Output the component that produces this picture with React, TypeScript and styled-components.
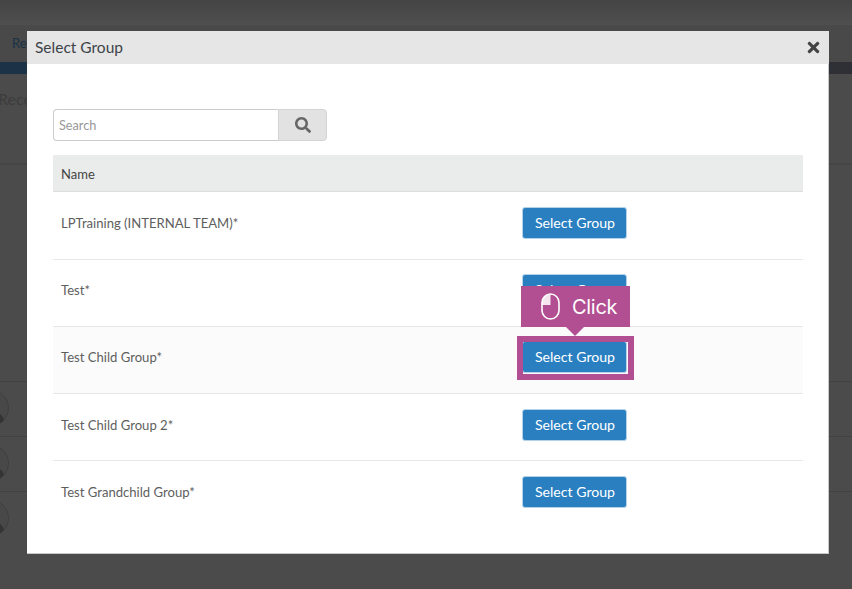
import React from 'react';
import styled, { createGlobalStyle } from 'styled-components';
import { FaSearch, FaTimes } from 'react-icons/fa';

const GlobalStyle = createGlobalStyle`
  html, body {
    margin: 0;
    padding: 0;
    height: 100%;
    overflow: hidden;
    font-family: Lato, "Liberation Sans", sans-serif;
    background: #fff;
  }
`;

const groups = [
  'LPTraining (INTERNAL TEAM)*',
  'Test*',
  'Test Child Group*',
  'Test Child Group 2*',
  'Test Grandchild Group*',
];

const Page = styled.div`
  width: 852px;
  height: 589px;
  display: flex;
  flex-direction: column;
  overflow: hidden;
  background: #f2f2f2;
`;
const TopBar = styled.div`
  height: 25px;
  background: linear-gradient(#dcdcdc, #ffffff);
`;
const Tabs = styled.div`
  height: 37px;
  padding-left: 12px;
  background: #ececec;
  box-sizing: border-box;
  font-size: 13px;
  line-height: 36px;
  color: #4fa3e0;
`;
const BlueBar = styled.div`
  height: 12px;
  background: linear-gradient(90deg, #5aa5e6, #979aae);
`;
const PageTitle = styled.h2`
  margin: 0 0 0 -2px;
  height: 90px;
  padding: 15px 0 0 0;
  box-sizing: border-box;
  font-size: 16px;
  font-weight: 400;
  color: #c4c4c4;
  border-bottom: 1px solid #dcdcdc;
`;
const Spacer = styled.div`
  height: 216px;
  border-top: 1px solid #e4e4e4;
`;
const PersonRow = styled.div`
  height: 55px;
  box-sizing: border-box;
  border-top: 1px solid #d6d6d6;
  display: flex;
  align-items: center;
`;
const AvatarIcon = styled.svg`
  width: 36px;
  height: 36px;
  margin: -3px 0 0 -27px;
`;

const Backdrop = styled.div`
  position: fixed;
  inset: 0;
  background: rgba(0, 0, 0, 0.69);
`;
const Modal = styled.div`
  position: fixed;
  left: 27px;
  top: 31px;
  width: 802px;
  height: 523px;
  background: #fff;
  box-shadow: inset -1px -1px 0 #c8c8c8;
`;
const ModalHeader = styled.div`
  height: 33px;
  box-sizing: border-box;
  padding: 0 8px 2px;
  display: flex;
  align-items: center;
  justify-content: space-between;
  background: #e6e6e6;
  color: #3d4349;
  font-size: 15.5px;
`;
const Close = styled.span`
  display: flex;
  color: #444;
  font-size: 17px;
  margin: 2px -1px 0 0;
`;
const ModalBody = styled.div`
  padding: 45px 26px 0;
`;
const SearchBar = styled.div`
  display: flex;
  width: 274px;
  height: 32px;
  margin-bottom: 14px;
`;
const SearchInput = styled.input`
  width: 225px;
  box-sizing: border-box;
  padding: 0 5px;
  border: 1px solid #ccc;
  border-right: none;
  border-radius: 4px 0 0 4px;
  font: 12.7px Lato, "Liberation Sans", sans-serif;
  outline: none;
  &::placeholder {
    color: #999;
    opacity: 1;
  }
`;
const SearchButton = styled.button`
  flex: 1;
  padding: 0;
  display: flex;
  align-items: center;
  justify-content: center;
  border: 1px solid #d4d4d4;
  border-radius: 0 4px 4px 0;
  background: #e2e2e2;
  color: #666;
  font-size: 16px;
`;
const Table = styled.div`
  width: 750px;
`;
const HeadRow = styled.div`
  height: 37px;
  box-sizing: border-box;
  padding: 1px 8px 0;
  display: flex;
  align-items: center;
  background: #eaeceb;
  border-bottom: 1px solid #ddd;
  font-size: 13px;
  color: #444;
`;
const Row = styled.div<{ $active?: boolean; $drop: number }>`
  position: relative;
  height: 67px;
  box-sizing: border-box;
  padding: 0 8px ${(props) => props.$drop}px;
  display: flex;
  align-items: center;
  font-size: 13.1px;
  color: #5e5e5e;
  background: ${(props) => (props.$active ? '#fbfbfb' : '#fff')};
  & + & {
    border-top: 1px solid #e7e7e7;
  }
`;
const Name = styled.span`
  width: 461px;
`;
const SelectButton = styled.button`
  width: 105px;
  height: 32px;
  padding: 0 0 1px 1px;
  border: 1px solid #b5d3e8;
  border-radius: 3px;
  background: #2a7fc1;
  color: #fff;
  font: 14.1px Lato, "Liberation Sans", sans-serif;
`;
const Highlight = styled.div`
  position: absolute;
  left: 464px;
  top: 9px;
  width: 117px;
  height: 44px;
  box-sizing: border-box;
  border: 6px solid #b24f92;
`;
const Callout = styled.div`
  position: absolute;
  left: 468px;
  top: -41px;
  width: 109px;
  height: 41px;
  display: flex;
  align-items: center;
  gap: 12px;
  padding-left: 20px;
  box-sizing: border-box;
  background: #b24f92;
  color: #fff;
  font-family: Inter, "Liberation Sans", sans-serif;
  font-size: 20px;
  letter-spacing: -0.3px;
  z-index: 1;
  &::after {
    content: '';
    position: absolute;
    left: 45px;
    bottom: -9px;
    border-left: 9px solid transparent;
    border-right: 9px solid transparent;
    border-top: 9px solid #b24f92;
  }
`;

const MouseIcon = () => (
  <svg width="19" height="27" viewBox="0 0 19 27" fill="none">
    <rect x="1" y="1" width="17" height="25" rx="8.5" stroke="#fff" strokeWidth="1.6" />
    <path d="M9.5 1A8.5 8.5 0 0 0 1 9.5V12H9.5Z" fill="#fff" fillOpacity="0.85" />
  </svg>
);

const Avatar = () => (
  <AvatarIcon viewBox="0 0 36 36">
    <circle cx="18" cy="18" r="17.5" fill="#e8e8e8" stroke="#c9c9c9" />
    <circle cx="18" cy="14" r="7.5" fill="#a8a8a8" />
    <path d="M5 30C7 23 12 22 18 22S29 23 31 30A17 17 0 0 1 5 30Z" fill="#a8a8a8" />
  </AvatarIcon>
);

export default function App() {
  return (
    <>
      <GlobalStyle />
      <Page>
        <TopBar />
        <Tabs>Recent</Tabs>
        <BlueBar />
        <PageTitle>Recent</PageTitle>
        <Spacer />
        {[0, 1, 2].map((i) => (
          <PersonRow key={i}>
            <Avatar />
          </PersonRow>
        ))}
      </Page>
      <Backdrop />
      <Modal>
        <ModalHeader>
          Select Group
          <Close>
            <FaTimes />
          </Close>
        </ModalHeader>
        <ModalBody>
          <SearchBar>
            <SearchInput placeholder="Search" />
            <SearchButton>
              <FaSearch />
            </SearchButton>
          </SearchBar>
          <Table>
            <HeadRow>Name</HeadRow>
            {groups.map((group, i) => (
              <Row key={group} $active={i === 2} $drop={i < 3 ? 6 : 4}>
                <Name>{group}</Name>
                <SelectButton>Select Group</SelectButton>
                {i === 2 && (
                  <>
                    <Highlight />
                    <Callout>
                      <MouseIcon />
                      Click
                    </Callout>
                  </>
                )}
              </Row>
            ))}
          </Table>
        </ModalBody>
      </Modal>
    </>
  );
}
